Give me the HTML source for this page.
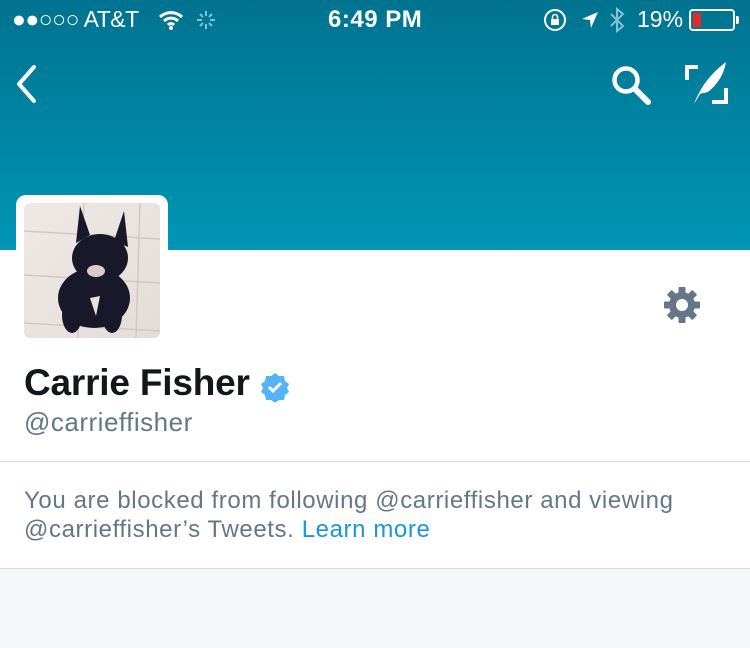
<!DOCTYPE html>
<html><head><style>
*{margin:0;padding:0;box-sizing:border-box}
body{width:750px;height:648px;overflow:hidden;background:#f5f8fa;font-family:"Liberation Sans",sans-serif;position:relative}
.hdr{position:absolute;left:0;top:0;width:750px;height:250px;background:linear-gradient(#00738f,#0096b6)}
.wh{position:absolute;left:0;top:250px;width:750px;height:319px;background:#fff;border-bottom:1px solid #d6dbdf}
.sb{position:absolute;top:6px;color:#fff;font-size:23px}
.av{position:absolute;left:16px;top:195px;width:152px;height:148px;background:#fff;border-radius:10px}
.img{position:absolute;left:24px;top:203px;width:136px;height:135px;border-radius:6px;background:linear-gradient(135deg,#efe9e6,#e4dcd8);overflow:hidden}
.t{position:absolute;white-space:nowrap}
</style></head><body>
<div class="hdr"></div>
<div class="wh"></div>
<div class="sb" style="left:12px;letter-spacing:-0.5px">●●○○○ AT&amp;T</div>
<svg style="position:absolute;left:158px;top:10px" width="26" height="20" viewBox="0 0 26 20"><path d="M2 7a16 16 0 0 1 22 0M6 11a10 10 0 0 1 14 0M10 15a4 4 0 0 1 6 0" stroke="#fff" stroke-width="3" fill="none"/><circle cx="13" cy="18" r="2" fill="#fff"/></svg>
<svg style="position:absolute;left:196px;top:10px" width="20" height="20" viewBox="0 0 20 20" stroke="#7fc3d3" stroke-width="2"><path d="M10 1v5M10 14v5M1 10h5M14 10h5M4 4l3 3M13 13l3 3M16 4l-3 3M4 16l3-3"/></svg>
<div class="sb" style="left:328px;font-weight:bold;font-size:24px;letter-spacing:0.5px">6:49 PM</div>
<svg style="position:absolute;left:543px;top:8px" width="24" height="24" viewBox="0 0 24 24"><circle cx="12" cy="12" r="10" stroke="#fff" stroke-width="2" fill="none"/><rect x="8" y="11" width="8" height="6" fill="#fff"/><path d="M9.5 11V9a2.5 2.5 0 0 1 5 0v2" stroke="#fff" stroke-width="1.5" fill="none"/></svg>
<svg style="position:absolute;left:580px;top:10px" width="20" height="20" viewBox="0 0 20 20"><path d="M18 2L2 9l8 1 1 8z" fill="#fff"/></svg>
<svg style="position:absolute;left:609px;top:7px" width="16" height="26" viewBox="0 0 16 26"><path d="M2 7l12 12-6 5V2l6 5L2 19" stroke="#7fc3d3" stroke-width="2" fill="none"/></svg>
<div class="sb" style="left:637px">19%</div>
<div style="position:absolute;left:689px;top:9px;width:46px;height:22px;border:2px solid #fff;border-radius:4px"><div style="position:absolute;left:2px;top:2px;width:8px;height:14px;background:#e8272a"></div></div>
<div style="position:absolute;left:736px;top:16px;width:3px;height:8px;background:#fff;border-radius:0 2px 2px 0"></div>
<svg style="position:absolute;left:14px;top:64px" width="26" height="40" viewBox="0 0 26 40"><path d="M20 3L5 20l15 17" stroke="#fff" stroke-width="4" fill="none" stroke-linecap="round" stroke-linejoin="round"/></svg>
<svg style="position:absolute;left:610px;top:64px" width="44" height="42" viewBox="0 0 44 42"><circle cx="16" cy="16" r="11.5" stroke="#fff" stroke-width="4.5" fill="none"/><path d="M25 25l13 13" stroke="#fff" stroke-width="6" stroke-linecap="round"/></svg>
<svg style="position:absolute;left:684px;top:60px" width="46" height="46" viewBox="0 0 46 46"><path d="M3 20V7h11M42 28v14H28" stroke="#fff" stroke-width="4" fill="none"/><path d="M10 44C16 28 26 14 42 2c-2 12-8 22-18 30-3 1-6 1-8 2" fill="#fff"/></svg>
<div class="av"></div>
<div class="img">
<svg width="136" height="135" viewBox="0 0 136 135"><path d="M0 28L136 36M0 72L136 80M0 120L136 128M60 0L54 135M116 0L112 135" stroke="#d4c7c0" stroke-width="1.5"/>
<g fill="#18182a">
<path d="M52 40L56 3 66 32z"/><path d="M90 38L100 8 104 44z"/>
<ellipse cx="76" cy="55" rx="28" ry="24"/>
<ellipse cx="70" cy="95" rx="36" ry="30"/>
<ellipse cx="48" cy="112" rx="10" ry="18"/><ellipse cx="88" cy="112" rx="10" ry="18"/>
</g>
<ellipse cx="72" cy="68" rx="9" ry="6" fill="#d8ccc4"/><path d="M66 95l10-2-4 20z" fill="#e8e0dc"/></svg>
</div>
<svg style="position:absolute;left:662px;top:285px" width="40" height="40" viewBox="0 0 40 40"><g fill="#657786"><circle cx="20" cy="20" r="13"/><g id="tt"><rect x="16.5" y="2" width="7" height="8" rx="1"/><rect x="16.5" y="30" width="7" height="8" rx="1"/></g><use href="#tt" transform="rotate(45 20 20)"/><use href="#tt" transform="rotate(90 20 20)"/><use href="#tt" transform="rotate(135 20 20)"/></g><circle cx="20" cy="20" r="6" fill="#fff"/></svg>
<div class="t" style="left:24px;top:362px;font-size:37px;font-weight:bold;color:#14171a;letter-spacing:-0.2px">Carrie Fisher</div>
<svg style="position:absolute;left:260px;top:372px" width="30" height="30" viewBox="0 0 30 30"><path d="M15 1l4 3 5 0 1 5 4 3-2 4 2 4-4 3-1 5-5 0-4 3-4-3-5 0-1-5-4-3 2-4-2-4 4-3 1-5 5 0z" fill="#55b4f4"/><path d="M9 15l4 4 8-8" stroke="#fff" stroke-width="3" fill="none"/></svg>
<div class="t" style="left:24px;top:407px;font-size:26px;color:#657786;letter-spacing:0.5px">@carrieffisher</div>
<div style="position:absolute;left:0;top:461px;width:750px;height:1px;background:#d6dbdf"></div>
<div class="t" style="left:24px;top:486px;font-size:24px;color:#657786;line-height:29px;letter-spacing:0.6px">You are blocked from following @carrieffisher and viewing<br>@carrieffisher’s Tweets. <span style="color:#1b95e0">Learn more</span></div>
</body></html>
